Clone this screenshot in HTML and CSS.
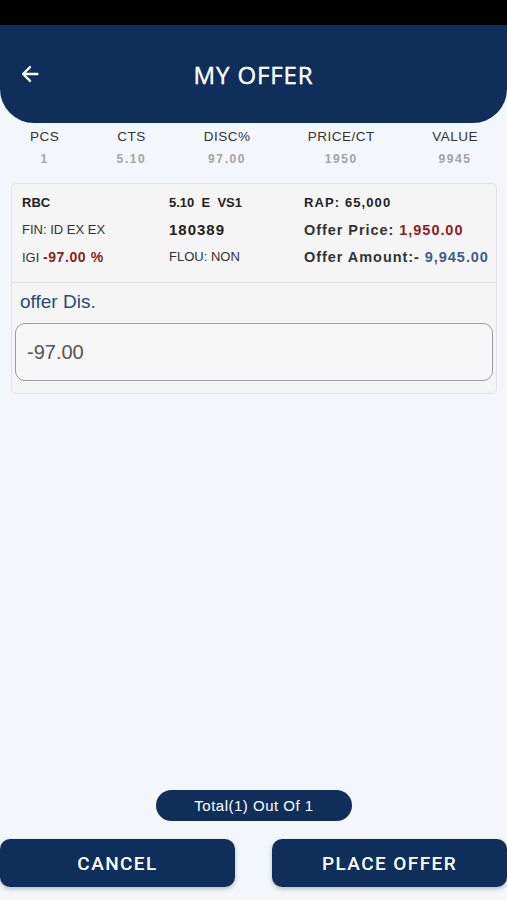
FILE: index.html
```html
<!DOCTYPE html>
<html>
<head>
<meta charset="utf-8">
<link rel="stylesheet" href="styles.css">
</head>
<body>
<div class="screen">
  <div class="statusbar"></div>
  <header class="header">
    <svg class="back" width="22" height="22" viewBox="0 0 24 24"><path d="M20 12H5M12 4.5L4.5 12 12 19.5" fill="none" stroke="#fff" stroke-width="2.6" stroke-linecap="round" stroke-linejoin="round"/></svg>
    <h1 class="title">MY OFFER</h1>
  </header>
  <div class="stats">
    <div class="stat"><div class="stat-label">PCS</div><div class="stat-value">1</div></div>
    <div class="stat"><div class="stat-label">CTS</div><div class="stat-value">5.10</div></div>
    <div class="stat"><div class="stat-label">DISC%</div><div class="stat-value">97.00</div></div>
    <div class="stat"><div class="stat-label">PRICE/CT</div><div class="stat-value">1950</div></div>
    <div class="stat"><div class="stat-label">VALUE</div><div class="stat-value">9945</div></div>
  </div>
  <div class="card">
    <div class="card-top">
      <div class="col col-1">
        <div class="row b">RBC</div>
        <div class="row">FIN: ID EX EX</div>
        <div class="row">IGI <span class="red b pct">-97.00 %</span></div>
      </div>
      <div class="col col-2">
        <div class="row b">5.10&nbsp; E&nbsp; VS1</div>
        <div class="row b big">180389</div>
        <div class="row">FLOU: NON</div>
      </div>
      <div class="col col-3">
        <div class="row b">RAP: 65,000</div>
        <div class="row b mid">Offer Price: <span class="red">1,950.00</span></div>
        <div class="row b mid">Offer Amount:- <span class="blue">9,945.00</span></div>
      </div>
    </div>
    <div class="card-bottom">
      <div class="field-label">offer Dis.</div>
      <div class="input">-97.00</div>
    </div>
  </div>
  <div class="spacer"></div>
  <div class="pill-wrap"><div class="pill">Total(1) Out Of 1</div></div>
  <div class="actions">
    <button class="btn">CANCEL</button>
    <button class="btn">PLACE OFFER</button>
  </div>
</div>
</body>
</html>
```
FILE: styles.css
```css
* { box-sizing: border-box; }
html, body { margin: 0; padding: 0; }
body {
  background: #f3f7fc;
  font-family: "Liberation Sans", Arial, sans-serif;
  color: #222;
}
.screen {
  width: 507px;
  height: 900px;
  display: flex;
  flex-direction: column;
  overflow: hidden;
}
.statusbar { height: 25px; background: #000; flex: none; }
.header {
  flex: none;
  height: 98px;
  background: #0f2f5a;
  border-radius: 0 0 34px 34px;
  display: flex;
  align-items: center;
  justify-content: center;
  position: relative;
}
.back { position: absolute; left: 19px; top: 38px; }
.title {
  margin: 0;
  color: #fff;
  font-family: "Open Sans", sans-serif;
  font-weight: 400;
  font-size: 24px;
  letter-spacing: 0.9px;
  -webkit-text-stroke: 0.4px #fff;
}
.stats {
  display: flex;
  justify-content: space-between;
  padding: 6px 29px 0 30px;
  flex: none;
}
.stat { display: flex; flex-direction: column; align-items: center; }
.stat-label { font-size: 13.5px; color: #333; letter-spacing: 0.5px; line-height: 16px; }
.stat-value { font-size: 12px; color: #a3a3a3; letter-spacing: 1.6px; line-height: 16px; margin-top: 6px; font-weight: bold; }
.card {
  margin: 16px 10px 0 11px;
  background: #f5f5f6;
  border: 1px solid #e2e2e4;
  border-radius: 5px;
  flex: none;
}
.card-top {
  display: flex;
  padding: 10px 0 5px 10px;
  border-bottom: 1px solid #dedee0;
  height: 99px;
}
.col { display: flex; flex-direction: column; }
.col-1 { width: 147px; }
.col-2 { width: 135px; }
.row { font-size: 13px; color: #333; height: 27px; line-height: 18px; }
.b { font-weight: bold; color: #222; }
.pct { font-size: 14px; letter-spacing: 0.6px; }
.big { font-size: 15px; letter-spacing: 1px; }
.col-3 .row { letter-spacing: 1.1px; }
.col-3 .mid { font-size: 14.5px; color: #333; letter-spacing: 0.95px; }
.red { color: #8c1d22; }
.blue { color: #3d5d86; }
.card-bottom { padding: 8px 3px 12px 3px; }
.field-label { font-size: 19px; color: #2c4a72; padding-left: 5px; line-height: 22px; }
.input {
  margin-top: 10px;
  height: 58px;
  border: 1.5px solid #9a9ca2;
  border-radius: 10px;
  background: #f7f7f8;
  font-size: 20px;
  color: #555;
  display: flex;
  align-items: center;
  padding-left: 11px;
}
.spacer { flex: 1; }
.pill-wrap { display: flex; justify-content: center; flex: none; }
.pill {
  margin-left: 1px;
  width: 196px;
  height: 31px;
  border-radius: 16px;
  background: #0f2f5a;
  color: #fff;
  font-size: 15px;
  display: flex;
  align-items: center;
  justify-content: center;
  letter-spacing: 0.5px;
}
.actions {
  display: flex;
  justify-content: space-between;
  margin-top: 18px;
  margin-bottom: 13px;
  flex: none;
}
.btn {
  width: 235px;
  height: 48px;
  border: none;
  border-radius: 10px;
  background: #0f2f5a;
  color: #fff;
  font-family: Roboto, sans-serif;
  font-weight: 500;
  font-size: 19px;
  letter-spacing: 1.4px;
  box-shadow: 0 2px 4px rgba(0,0,0,0.25);
  padding: 0;
}
```
